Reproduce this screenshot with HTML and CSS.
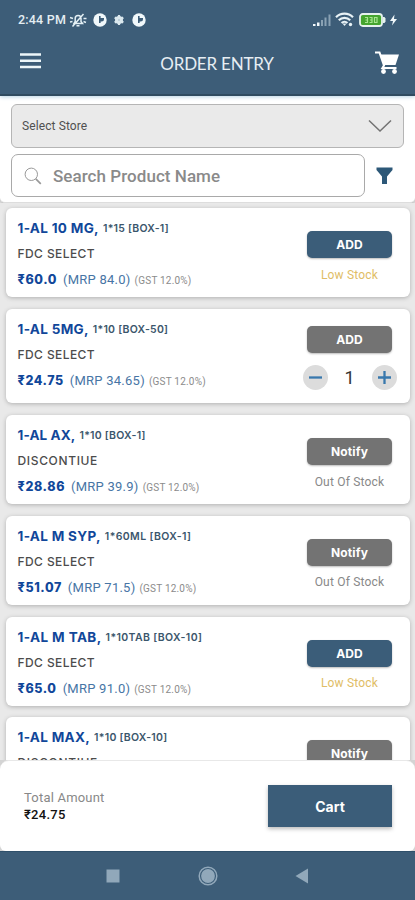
FILE: index.html
```html
<!DOCTYPE html>
<html lang="en">
<head>
<meta charset="utf-8">
<title>Order Entry</title>
<link rel="stylesheet" href="styles.css">
</head>
<body>
<div class="app">
  <header class="header">
    <div class="status">
      <span class="clock">2:44 PM</span>
      <svg class="bell" width="18" height="16" viewBox="0 0 18 16" fill="none" stroke="#e4f0f5" stroke-width="1.5"><path d="M5 11.500h8.500l-1.500-2V6.500a2.900 2.900 0 0 0-5.800 0v3zM3.500 14.500 14.500 2M7.500 13.800h3M1 5.500l3 1M1 10l2.500-.5M14.500 6.500h3M14.500 9.500l2.500 1"/></svg>
      <svg class="disc" width="14" height="14" viewBox="0 0 14 14"><circle cx="7" cy="7" r="6.700" fill="#f1f8fb"/><path d="M6 3h1.600v2H11v1a2.500 2.500 0 0 1-2.500 2.500H7.600V10H6z" fill="#3d5d78"/></svg>
      <svg class="flower" width="12" height="12" viewBox="0 0 12 12" fill="#dbe8ee"><circle cx="6" cy="6" r="4"/><path d="M6 1v10M1.700 3.500l8.600 5M1.700 8.500l8.600-5" stroke="#dbe8ee" stroke-width="2.200"/><circle cx="6" cy="6" r="1" fill="#b5c8d3"/></svg>
      <svg class="disc" width="14" height="14" viewBox="0 0 14 14"><circle cx="7" cy="7" r="6.700" fill="#f1f8fb"/><path d="M6 3h1.600v2H11v1a2.500 2.500 0 0 1-2.500 2.500H7.600V10H6z" fill="#3d5d78"/></svg>
      <svg class="signal" width="20" height="14" viewBox="0 0 20 14"><path d="M1 11h2.500v2H1zM5 9.500h2.500V13H5z" fill="#f1f8fb"/><path d="M9 7h2v6H9zM12.500 4.500h2V13h-2zM16.500 1.500h2V13h-2z" fill="#8aa2b4"/></svg>
      <svg class="wifi" width="19" height="15" viewBox="0 0 19 15" fill="none" stroke="#e8f2f6" stroke-width="2.200"><path d="M1 5.200a12 12 0 0 1 17 0M3.800 8.200a8 8 0 0 1 11.400 0M6.600 11a4 4 0 0 1 5.800 0"/><path d="M7.500 11.500h4l-2 2.500z" fill="#e8f2f6" stroke="none"/><circle cx="15.500" cy="12.500" r="1.700" fill="#e8f2f6" stroke="none"/></svg>
      <svg class="battery" width="27" height="14" viewBox="0 0 27 14"><rect x="1" y="1" width="22" height="12" rx="2.800" fill="#45a52f" stroke="#e6f2ee" stroke-width="1.800"/><path d="M24 4h1.500l1 1.500v3l-1 1.500H24z" fill="#e6f2ee"/><path d="M6 4.500h2.500v5H6M8.500 7H6.500M10.500 4.500H13v5h-2.500M13 7h-2M15.500 4.500H18v5h-2.500z" fill="none" stroke="#a8e690" stroke-width="1.200"/></svg>
      <svg class="bolt" width="9" height="12" viewBox="0 0 9 12"><path d="M5.500.5 1 7h3L3 11.500 8 5H5z" fill="#f1f8fb"/></svg>
    </div>
    <div class="appbar">
      <svg class="menu" width="21" height="16" viewBox="0 0 21 16"><path d="M0 1.500h21M0 7.800h21M0 14h21" stroke="#edf6f9" stroke-width="2.400"/></svg>
      <h1 class="title">ORDER ENTRY</h1>
      <svg class="trolley" width="25" height="24" viewBox="0 0 25 24"><path d="M0 1.500h4.500L9 14.500 7.500 17h14" fill="none" stroke="#fff" stroke-width="2.100"/><path d="M5 3.500h19L20.500 14H9z" fill="#fff"/><circle cx="8.500" cy="20.500" r="2.400" fill="#fff"/><circle cx="19.500" cy="20.500" r="2.400" fill="#fff"/></svg>
    </div>
  </header>

  <section class="filters">
    <div class="select"><span>Select Store</span>
      <svg width="24" height="14" viewBox="0 0 24 14"><path d="M1 1.500 12 12 23 1.500" fill="none" stroke="#737373" stroke-width="1.500"/></svg>
    </div>
    <div class="search-row">
      <div class="search">
        <svg width="18" height="18" viewBox="0 0 18 18" fill="none" stroke="#999"><circle cx="7.300" cy="7.300" r="6.200" stroke-width="1"/><path d="m11.800 11.800 5 5" stroke-width="1.700"/></svg>
        <span>Search Product Name</span>
      </div>
      <svg class="funnel" width="17" height="18" viewBox="0 0 17 18"><path d="M.5.500h16V3L11 9.500V17H6V9.500L.5 3z" fill="#2d5878"/></svg>
    </div>
  </section>

  <main class="list">
    <article class="card">
      <div class="info">
        <div class="name"><b>1-AL 10 MG,</b><span>1*15 [BOX-1]</span></div>
        <div class="maker">FDC SELECT</div>
        <div class="price"><b>₹60.0</b><span class="mrp">(MRP 84.0)</span><small>(GST 12.0%)</small></div>
      </div>
      <div class="side"><div class="btn blue">ADD</div><div class="note low">Low Stock</div></div>
    </article>
    <article class="card tall">
      <div class="info">
        <div class="name"><b>1-AL 5MG,</b><span>1*10 [BOX-50]</span></div>
        <div class="maker">FDC SELECT</div>
        <div class="price"><b>₹24.75</b><span class="mrp">(MRP 34.65)</span><small>(GST 12.0%)</small></div>
      </div>
      <div class="side"><div class="btn">ADD</div>
        <div class="stepper">
          <span class="round"><svg width="15" height="15" viewBox="0 0 15 15"><path d="M1 7.500h13" stroke="#3878ad" stroke-width="2.300"/></svg></span>
          <span class="qty">1</span>
          <span class="round"><svg width="15" height="15" viewBox="0 0 15 15"><path d="M1 7.500h13M7.500 1v13" stroke="#3878ad" stroke-width="2.300"/></svg></span>
        </div>
      </div>
    </article>
    <article class="card">
      <div class="info">
        <div class="name tight"><b>1-AL AX,</b><span>1*10 [BOX-1]</span></div>
        <div class="maker wide">DISCONTIUE</div>
        <div class="price"><b>₹28.86</b><span class="mrp">(MRP 39.9)</span><small>(GST 12.0%)</small></div>
      </div>
      <div class="side"><div class="btn">Notify</div><div class="note">Out Of Stock</div></div>
    </article>
    <article class="card">
      <div class="info">
        <div class="name loose"><b>1-AL M SYP,</b><span>1*60ML [BOX-1]</span></div>
        <div class="maker">FDC SELECT</div>
        <div class="price"><b>₹51.07</b><span class="mrp">(MRP 71.5)</span><small>(GST 12.0%)</small></div>
      </div>
      <div class="side"><div class="btn">Notify</div><div class="note">Out Of Stock</div></div>
    </article>
    <article class="card">
      <div class="info">
        <div class="name loose"><b class="tab">1-AL M TAB,</b><span>1*10TAB [BOX-10]</span></div>
        <div class="maker">FDC SELECT</div>
        <div class="price"><b>₹65.0</b><span class="mrp">(MRP 91.0)</span><small>(GST 12.0%)</small></div>
      </div>
      <div class="side"><div class="btn blue">ADD</div><div class="note low">Low Stock</div></div>
    </article>
    <article class="card">
      <div class="info">
        <div class="name"><b>1-AL MAX,</b><span>1*10 [BOX-10]</span></div>
        <div class="maker wide">DISCONTIUE</div>
      </div>
      <div class="side"><div class="btn">Notify</div></div>
    </article>
  </main>

  <div class="dock">
    <footer class="total">
      <div class="sum"><div class="sum-label">Total Amount</div><div class="sum-value">₹24.75</div></div>
      <div class="cart">Cart</div>
    </footer>
  </div>

  <nav class="nav">
    <svg width="14" height="14" viewBox="0 0 14 14"><path d="M.5.500h13v13H.5z" fill="#91a8ba"/></svg>
    <svg width="20" height="20" viewBox="0 0 20 20"><circle cx="10" cy="10" r="8.800" fill="none" stroke="#91a8ba" stroke-width="1.500"/><circle cx="10" cy="10" r="6.900" fill="#91a8ba"/></svg>
    <svg width="14" height="16" viewBox="0 0 14 16"><path d="M13 .5v15L.5 8z" fill="#91a8ba"/></svg>
  </nav>
</div>
</body>
</html>
```
FILE: styles.css
```css
* { box-sizing: border-box; }
body { margin: 0; font-family: Roboto, sans-serif; background: #e9e9e9; }
svg { display: block; flex: none; }
.app { width: 415px; height: 900px; display: flex; flex-direction: column; overflow: hidden; }

.header { height: 96px; flex: none; background: #3d5d78; border-bottom: 2px solid #304b60; z-index: 1; box-shadow: 0 1px 4px #b9d3e5; }
.status { height: 38px; padding: 1px 17px 0 18px; display: flex; align-items: center; }
.clock { width: 49px; font-size: 12.5px; font-weight: 500; letter-spacing: .2px; color: #e4edf2; white-space: nowrap; }
.bell { margin-left: 2px; }
.disc { margin-left: 6px; }
.flower { margin-left: 6px; }
.flower + .disc { margin-left: 7px; }
.signal { margin-left: auto; }
.wifi { margin-left: 3px; }
.battery { margin-left: 5px; }
.bolt { margin-left: 3px; }
.appbar { height: 50px; padding: 0 16px 0 20px; display: flex; align-items: center; justify-content: space-between; }
.menu { margin-top: -5px; }
.title { margin: 0 0 0 18px; font: 400 17px Lato, sans-serif; letter-spacing: -.2px; color: #e7eef3; }
.trolley { margin-right: -1px; }

.filters { height: 107px; flex: none; padding: 8px 11px 0; background: #fff; border-bottom: 1px solid #ddd; border-radius: 0 0 5px 5px; box-shadow: 0 1px 4px #aaa; }
.select { height: 44px; padding: 0 11px 0 10px; display: flex; align-items: center; justify-content: space-between; background: #eaeaea; border: 1.5px solid #b5b5b5; border-radius: 6px; font-size: 12px; letter-spacing: .1px; color: #505050; }
.search-row { margin-top: 6px; display: flex; align-items: center; }
.search { width: 354px; height: 43px; padding: 0 12px; display: flex; align-items: center; gap: 11px; background: #fff; border: 1.5px solid #a9a9a9; border-radius: 7px; font-size: 17px; font-weight: 500; letter-spacing: .05px; color: #8a8a8a; }
.funnel { margin-left: 11px; }

.list { height: 557px; flex: none; padding: 5px 5px 0 6px; overflow: hidden; display: flex; flex-direction: column; gap: 11.8px; background: #e9e9e9; }
.card { height: 89px; flex: none; padding: 11px 18px 0 11.5px; display: flex; justify-content: space-between; background: #fff; border-radius: 6px; box-shadow: 0 1px 4px #b0b0b0; }
.card.tall { height: 94.5px; }
.info { white-space: nowrap; font-family: Inter, sans-serif; }
.name { height: 18px; line-height: 18px; display: flex; gap: 4px; font-size: 13.5px; color: #11479a; }
.name b { font-weight: 700; letter-spacing: .32px; }
.name span { padding-top: 1px; font-size: 10.5px; font-weight: 600; letter-spacing: .25px; color: #3b566c; }
.tight b { letter-spacing: .1px; }
.loose span { letter-spacing: .38px; }
.name .tab { letter-spacing: .4px; }
.maker { height: 18px; margin-top: 8px; line-height: 18px; font-size: 12px; font-weight: 500; letter-spacing: .42px; color: #4c4c4c; }
.maker.wide { letter-spacing: .65px; }
.price { height: 18px; margin-top: 8px; line-height: 18px; display: flex; font-family: Roboto, sans-serif; color: #4775a5; }
.price b { font: 800 12.5px/18px Inter, sans-serif; letter-spacing: .6px; color: #11479a; }
.mrp { margin-left: 6px; font-size: 13px; letter-spacing: .25px; }
.price small { margin-left: 4px; padding-top: 1px; font-size: 10px; letter-spacing: .2px; color: #8b8b8b; }
.side { width: 85px; padding-top: 12px; display: flex; flex-direction: column; align-items: center; }
.tall .side { padding-top: 6px; }
.btn { width: 85px; height: 27px; flex: none; display: flex; align-items: center; justify-content: center; background: #737373; color: #fff; border-radius: 5px; font: 700 12px Inter, sans-serif; letter-spacing: .15px; box-shadow: 0 1px 2px #bbb; }
.blue { background: #3b5d79; }
.note { margin-top: 8.5px; line-height: 16px; font-size: 12px; letter-spacing: .2px; color: #888; white-space: nowrap; }
.low { color: #dfbd66; }
.stepper { width: 94px; margin-top: 12px; display: flex; align-items: center; justify-content: space-between; align-self: flex-start; margin-left: -4.5px; }
.round { width: 25px; height: 25px; display: flex; align-items: center; justify-content: center; border-radius: 50%; background: #dcdcdc; }
.qty { font: 400 18px Roboto, sans-serif; color: #333; }

.dock { height: 91px; flex: none; background: #d4d4d4; }
.total { height: 91px; padding: 0 23px 0 24px; display: flex; align-items: center; justify-content: space-between; background: #fff; border-radius: 9px 9px 6px 6px; border-top: 1px solid #e8e8e8; }
.sum { padding-top: 0; }
.sum-label { line-height: 17px; font-size: 13px; letter-spacing: .2px; color: #888; }
.sum-value { line-height: 18px; font-size: 13px; font-weight: 500; letter-spacing: .3px; color: #111; }
.cart { width: 124px; height: 42px; display: flex; align-items: center; justify-content: center; background: #3b5d79; color: #fff; font: 700 14px Inter, sans-serif; box-shadow: 0 2px 4px #bbb; }
.nav { height: 49px; flex: none; padding: 0 106px; display: flex; align-items: center; justify-content: space-between; background: #3d5d78; border-top: 1px solid #2f506b; }
```
